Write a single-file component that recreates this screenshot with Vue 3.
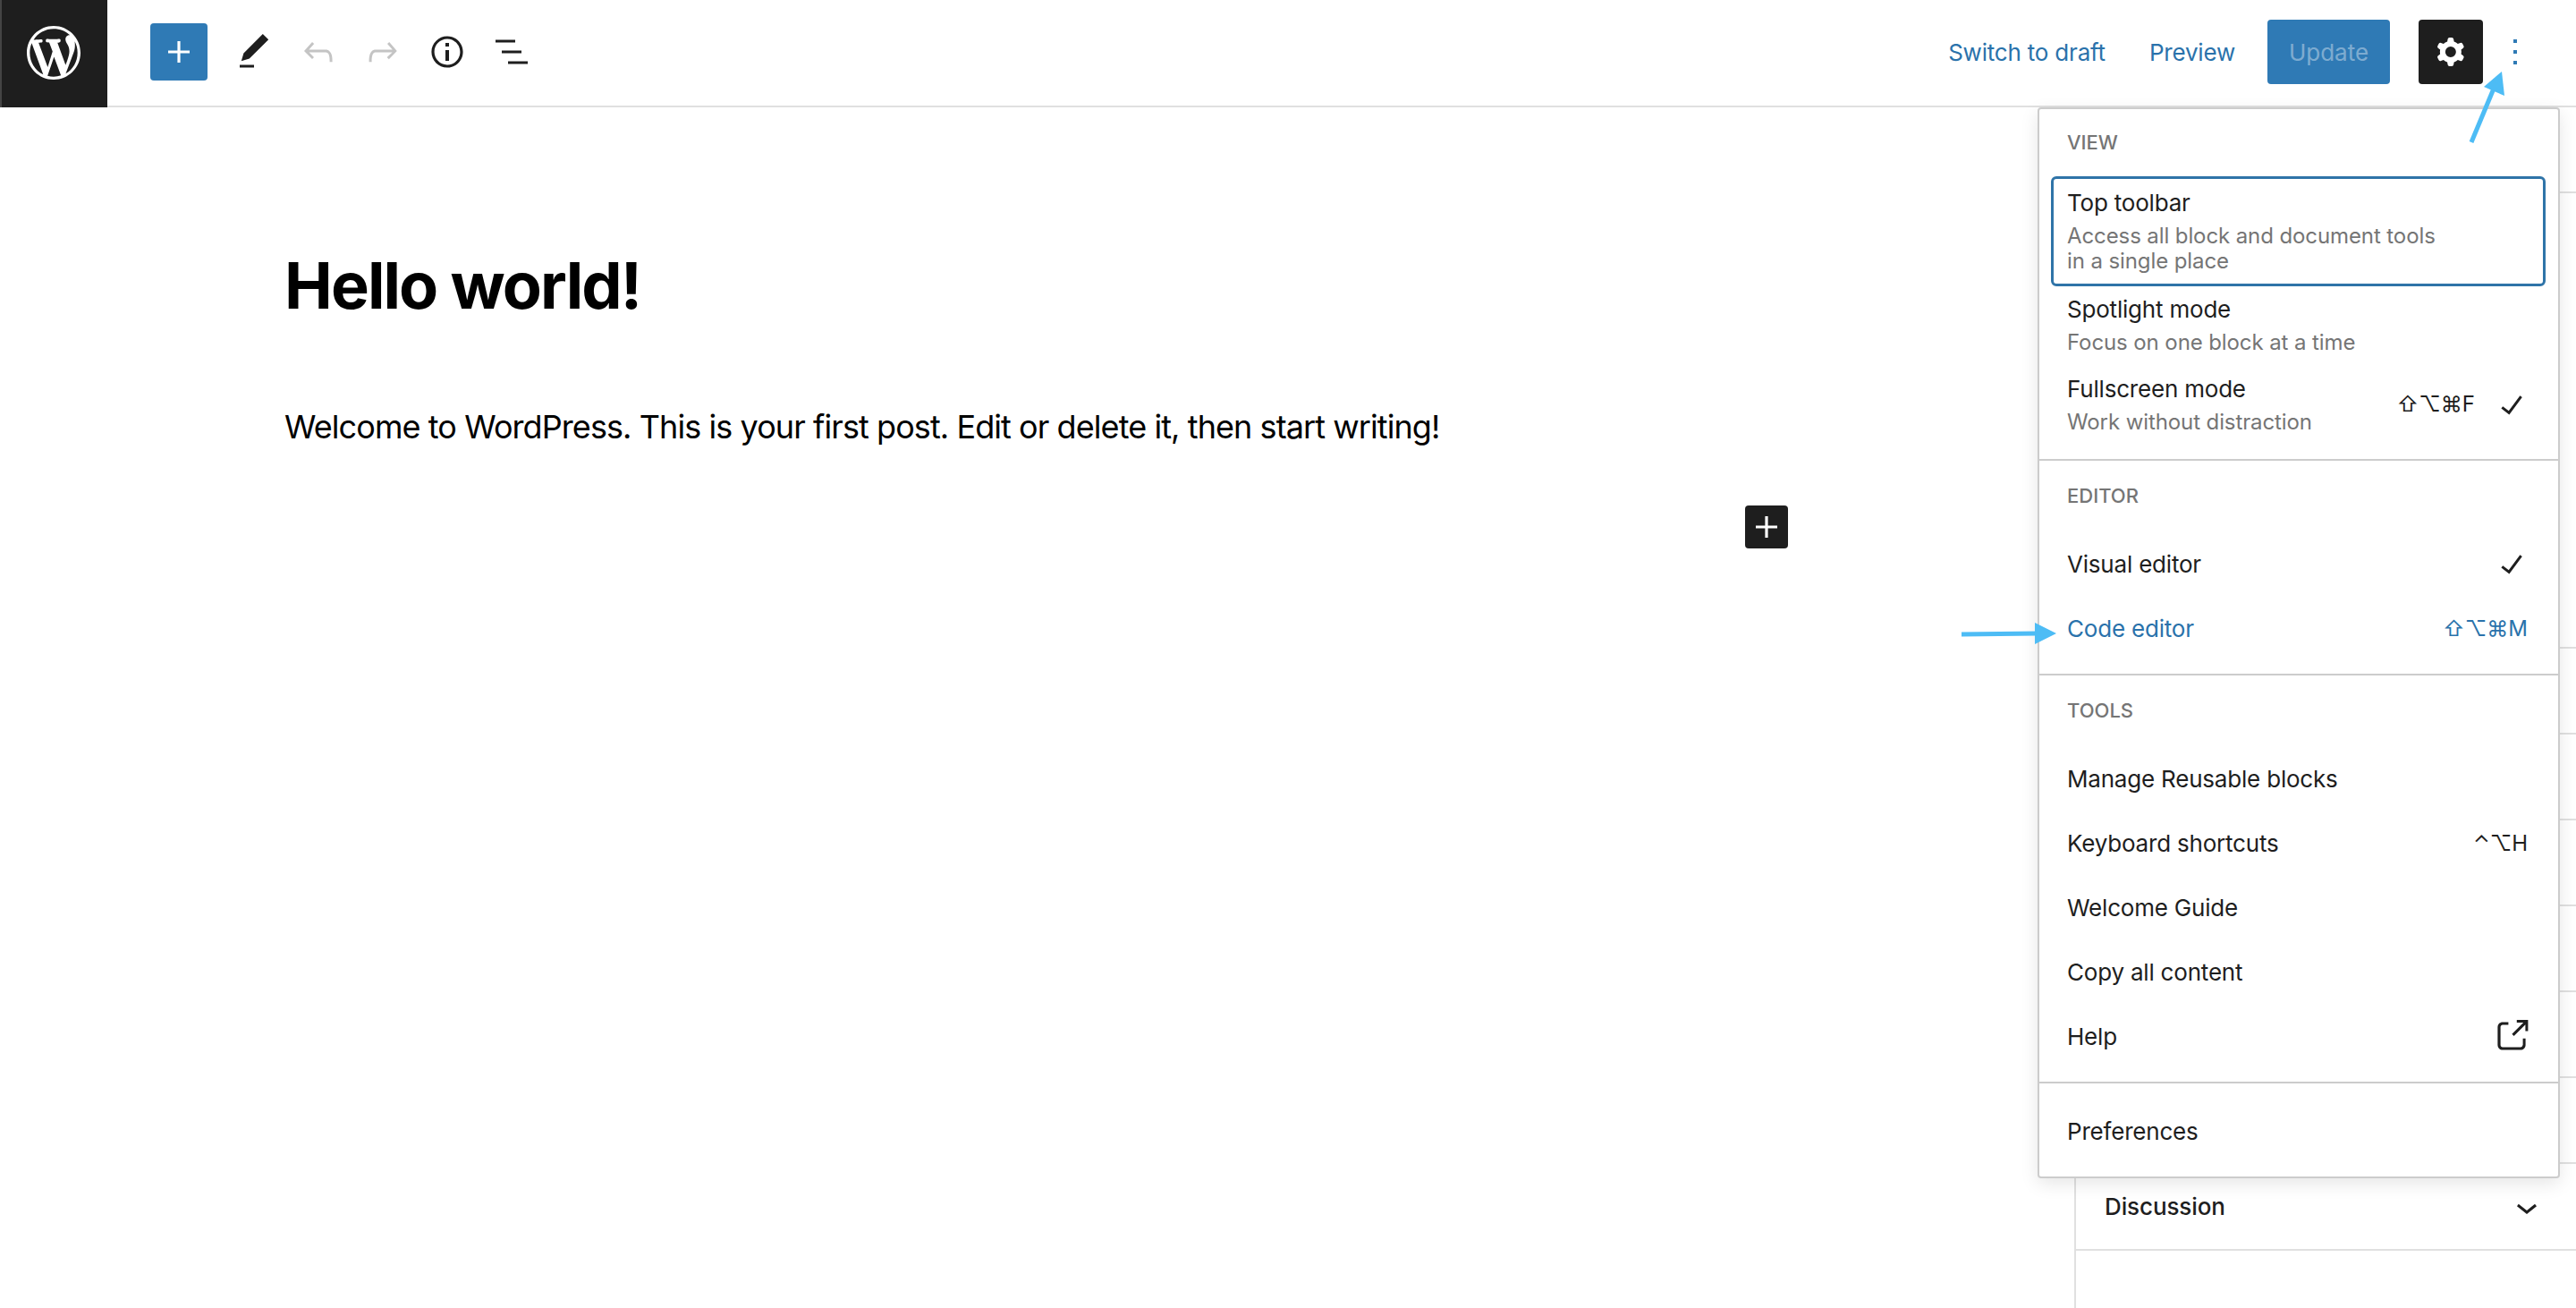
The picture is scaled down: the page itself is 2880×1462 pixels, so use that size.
<template>
  <div class="editor-page">
    <header class="topbar">
      <a class="logo">
        <svg width="60" height="60" viewBox="0 0 20 20" fill="#fff">
          <path d="M20 10c0-5.51-4.49-10-10-10C4.48 0 0 4.49 0 10c0 5.52 4.48 10 10 10 5.51 0 10-4.48 10-10zM7.78 15.37L4.37 6.22c.55-.02 1.17-.08 1.17-.08.5-.06.44-1.13-.06-1.11 0 0-1.45.11-2.37.11-.18 0-.37 0-.58-.01C4.12 2.69 6.87 1.11 10 1.11c2.33 0 4.45.87 6.05 2.34-.68-.11-1.65.39-1.65 1.58 0 .74.45 1.36.9 2.1.35.61.55 1.36.55 2.46 0 1.49-1.4 5-1.4 5l-3.03-8.37c.54-.02.82-.17.82-.17.5-.05.44-1.25-.06-1.22 0 0-1.44.12-2.38.12-.87 0-2.33-.12-2.33-.12-.5-.03-.56 1.2-.06 1.22l.92.08 1.26 3.41zM17.41 10c.24-.64.74-1.87.43-4.25.7 1.29 1.05 2.71 1.05 4.25 0 3.29-1.73 6.24-4.4 7.78.97-2.59 1.94-5.2 2.92-7.78zM6.1 18.09C3.12 16.65 1.11 13.53 1.11 10c0-1.3.23-2.48.72-3.59C3.25 10.3 4.67 14.2 6.1 18.09zm4.03-6.63l2.58 6.98c-.86.29-1.76.45-2.71.45-.79 0-1.57-.11-2.29-.33.81-2.38 1.62-4.74 2.42-7.1z" />
        </svg>
      </a>
      <button class="add-btn">
        <svg width="48" height="48" viewBox="0 0 24 24" fill="#fff"><path :d="plusPath" /></svg>
      </button>
      <div class="tools">
        <svg width="48" height="48" viewBox="0 0 24 24" fill="#1e1e1e"><path d="M20.1 5.1L16.9 2 6.2 12.7l-1.3 4.4 4.5-1.3L20.1 5.1zM4 20.8h8v-1.5H4v1.5z" /></svg>
        <svg width="48" height="48" viewBox="0 0 24 24" fill="#c4c4c4"><path d="M18.3 11.7c-.6-.6-1.4-.9-2.3-.9H6.7l2.9-3.3-1.1-1-4.5 5L8.5 16l1-1-2.7-2.7H16c.5 0 .9.2 1.3.5 1 1 1 3.4 1 4.5v.3h1.5v-.2c0-1.5 0-4.3-1.5-5.7z" /></svg>
        <svg width="48" height="48" viewBox="0 0 24 24" fill="#c4c4c4"><path d="M15.6 6.5l-1.1 1 2.9 3.3H8c-.9 0-1.7.3-2.3.9-1.4 1.5-1.4 4.2-1.4 5.7v.2h1.5v-.3c0-1.1 0-3.5 1-4.5.3-.3.7-.5 1.3-.5h9.2L14.3 15l1.1 1.1 4.5-4.6-4.3-5z" /></svg>
        <svg width="48" height="48" viewBox="0 0 24 24" fill="#1e1e1e"><path d="M12 3.2c-4.8 0-8.8 3.9-8.8 8.8 0 4.8 3.9 8.8 8.8 8.8 4.8 0 8.8-3.9 8.8-8.8 0-4.8-4-8.8-8.8-8.8zm0 16c-4 0-7.2-3.3-7.2-7.2C4.8 8 8 4.8 12 4.8s7.2 3.3 7.2 7.2c0 4-3.2 7.2-7.2 7.2zM11 17h2v-6h-2v6zm0-8h2V7h-2v2z" /></svg>
        <svg width="48" height="48" viewBox="0 0 24 24" fill="#1e1e1e"><path d="M3 5.2h11v1.5H3zM6.5 11.25h11v1.5h-11zM10 17.3h11v1.5H10z" /></svg>
      </div>
      <div class="actions">
        <a class="link switch">Switch to draft</a>
        <a class="link preview">Preview</a>
        <button class="update">Update</button>
        <button class="settings">
          <svg width="48" height="48" viewBox="0 0 24 24" fill="#fff"><path fill-rule="evenodd" clip-rule="evenodd" d="M10.289 4.836A1 1 0 0111.275 4h1.306a1 1 0 01.987.836l.244 1.466c.787.26 1.503.679 2.108 1.218l1.393-.522a1 1 0 011.216.437l.653 1.13a1 1 0 01-.23 1.273l-1.148.944a6.025 6.025 0 010 2.435l1.149.946a1 1 0 01.23 1.272l-.653 1.13a1 1 0 01-1.216.437l-1.394-.522c-.605.54-1.32.958-2.108 1.218l-.244 1.466a1 1 0 01-.987.836h-1.306a1 1 0 01-.986-.836l-.244-1.466a5.995 5.995 0 01-2.108-1.218l-1.394.522a1 1 0 01-1.217-.436l-.653-1.131a1 1 0 01.23-1.272l1.149-.946a6.026 6.026 0 010-2.435l-1.148-.944a1 1 0 01-.23-1.272l.653-1.131a1 1 0 011.217-.437l1.393.522a5.994 5.994 0 012.108-1.218l.244-1.466zM14.929 12a3 3 0 11-6 0 3 3 0 016 0z" /></svg>
        </button>
        <svg class="more" width="48" height="48" viewBox="0 0 24 24" fill="#2f7ab5"><path d="M13 19h-2v-2h2v2zm0-6h-2v-2h2v2zm0-6h-2V5h2v2z" /></svg>
      </div>
    </header>

    <main class="body">
      <section class="canvas">
        <h1 class="post-title">Hello world!</h1>
        <p class="post-text">Welcome to WordPress. This is your first post. Edit or delete it, then start writing!</p>
        <button class="inserter">
          <svg width="48" height="48" viewBox="0 0 24 24" fill="#fff"><path :d="plusPath" /></svg>
        </button>
      </section>
      <aside class="sidebar">
        <div class="panel panel-first"></div>
        <div class="panel panel-tall"></div>
        <div v-for="n in 6" :key="n" class="panel"></div>
        <div class="panel panel-last">
          <span>Discussion</span>
          <svg width="48" height="48" viewBox="0 0 24 24" fill="#1e1e1e"><path d="M17.5 11.6L12 16l-5.5-4.4.9-1.2L12 14l4.5-3.6 1 1.2z" /></svg>
        </div>
      </aside>
    </main>

    <div class="menu">
      <div class="group group-view">
        <div class="label">View</div>
        <div class="item item-focus">
          <div class="item-text">
            <div>Top toolbar</div>
            <div class="desc">Access all block and document tools<br />in a single place</div>
          </div>
        </div>
        <div class="item">
          <div class="item-text">
            <div>Spotlight mode</div>
            <div class="desc">Focus on one block at a time</div>
          </div>
        </div>
        <div class="item">
          <div class="item-text">
            <div>Fullscreen mode</div>
            <div class="desc">Work without distraction</div>
          </div>
          <span class="keys keys-check">⇧⌥⌘F</span>
          <svg width="48" height="48" viewBox="0 0 24 24" fill="#1e1e1e"><path :d="checkPath" /></svg>
        </div>
      </div>

      <div class="group">
        <div class="label">Editor</div>
        <div class="row">
          <span>Visual editor</span>
          <svg width="48" height="48" viewBox="0 0 24 24" fill="#1e1e1e"><path :d="checkPath" /></svg>
        </div>
        <div class="row row-active">
          <span>Code editor</span>
          <span class="keys">⇧⌥⌘M</span>
        </div>
      </div>

      <div class="group">
        <div class="label">Tools</div>
        <div class="row"><span>Manage Reusable blocks</span></div>
        <div class="row">
          <span>Keyboard shortcuts</span>
          <span class="keys">⌃⌥H</span>
        </div>
        <div class="row"><span>Welcome Guide</span></div>
        <div class="row"><span>Copy all content</span></div>
        <div class="row">
          <span>Help</span>
          <svg width="48" height="48" viewBox="0 0 24 24" fill="#1e1e1e"><path d="M18.2 17c0 .7-.6 1.2-1.2 1.2H7c-.7 0-1.2-.6-1.2-1.2V7c0-.7.6-1.2 1.2-1.2h3.2V4.2H7C5.5 4.2 4.2 5.5 4.2 7v10c0 1.5 1.2 2.8 2.8 2.8h10c1.5 0 2.8-1.2 2.8-2.8v-3.6h-1.5V17zM14.9 3v1.5h3.7l-6.4 6.4 1.1 1.1 6.4-6.4v3.7h1.5V3h-6.8z" /></svg>
        </div>
      </div>

      <div class="group group-last">
        <div class="row"><span>Preferences</span></div>
      </div>
    </div>

    <!-- annotation arrows on top of the screenshot -->
    <svg class="arrow arrow-up" width="60" height="90" viewBox="0 0 60 90">
      <path d="M5 80L30 20" stroke="#4dbcf5" stroke-width="5" fill="none" />
      <path d="M39 1L19 18L42 28z" fill="#4dbcf5" />
    </svg>
    <svg class="arrow arrow-right" width="110" height="30" viewBox="0 0 110 30">
      <path d="M1 16L86 15" stroke="#4dbcf5" stroke-width="5" fill="none" />
      <path d="M83 3L107 15L83 27z" fill="#4dbcf5" />
    </svg>
  </div>
</template>

<script setup>
const plusPath = 'M18 11.2h-5.2V6h-1.6v5.2H6v1.6h5.2V18h1.6v-5.2H18z';
const checkPath = 'M16.7 7.1l-6.3 8.5-3.3-2.5-.9 1.2 4.5 3.4L17.9 8z';
</script>

<style>
html,
body {
  margin: 0;
  background: #fff;
}
</style>

<style scoped>
.editor-page {
  position: relative;
  height: 100vh;
  overflow: hidden;
  background: #fff;
  color: #1e1e1e;
  font-family: Inter, 'DejaVu Sans', sans-serif;
  font-size: 26px;
}

button {
  border: none;
  padding: 0;
  font: inherit;
  display: flex;
  align-items: center;
  justify-content: center;
}

.topbar {
  display: flex;
  align-items: center;
  box-sizing: border-box;
  height: 120px;
  padding-bottom: 2px;
  border-bottom: 2px solid #e0e0e0;
}

.logo {
  align-self: flex-start;
  box-sizing: border-box;
  width: 120px;
  height: 120px;
  padding: 0 2px 2px 0;
  display: flex;
  align-items: center;
  justify-content: center;
  background: #1e1e1e;
  border-left: 2px solid #444;
}

.add-btn {
  width: 64px;
  height: 64px;
  margin-left: 48px;
  border-radius: 4px;
  background: #2f7ab5;
}

.tools {
  display: flex;
  gap: 24px;
  margin-left: 28px;
}

.actions {
  display: flex;
  align-items: center;
  margin-left: auto;
  padding-right: 44px;
}

.link {
  color: #2a72ab;
  letter-spacing: -0.2px;
}

.preview {
  margin-left: 49px;
}

.update {
  width: 137px;
  height: 72px;
  margin-left: 36px;
  border-radius: 4px;
  background: #2f7ab5;
  color: rgba(255, 255, 255, 0.4);
}

.settings {
  width: 72px;
  height: 72px;
  margin-left: 32px;
  border-radius: 4px;
  background: #1e1e1e;
}

.more {
  margin-left: 12px;
}

.body {
  display: flex;
  height: calc(100vh - 120px);
}

.canvas {
  flex: 1;
  box-sizing: border-box;
  padding: 149px 318px 0 318px;
}

.post-title {
  margin: 0;
  font-size: 72px;
  line-height: 100px;
  font-weight: 700;
  letter-spacing: -1.9px;
  color: #000;
}

.post-text {
  margin: 78px 0 0;
  font-size: 36px;
  line-height: 60px;
  letter-spacing: -0.92px;
  color: #000;
  white-space: nowrap;
}

.inserter {
  width: 48px;
  height: 48px;
  margin: 58px 0 0 1633px;
  border-radius: 4px;
  background: #1e1e1e;
}

.sidebar {
  width: 561px;
  flex: none;
  border-left: 2px solid #e0e0e0;
  box-sizing: border-box;
}

.panel {
  box-sizing: border-box;
  height: 96px;
  border-bottom: 2px solid #e0e0e0;
}

.panel-tall {
  height: 509px;
}

.panel-last {
  height: 97px;
  padding: 0 31px 0 32px;
  display: flex;
  align-items: center;
  justify-content: space-between;
  font-weight: 500;
  letter-spacing: -0.1px;
}

.menu {
  position: absolute;
  top: 120px;
  left: 2278px;
  width: 584px;
  box-sizing: border-box;
  border: 2px solid #ccc;
  border-radius: 4px;
  background: #fff;
  box-shadow: 0 6px 20px rgba(0, 0, 0, 0.1);
  letter-spacing: -0.2px;
}

.group {
  padding: 19px 14px 15px 13px;
  border-top: 2px solid #ccc;
}

.group-view {
  padding-top: 17px;
  border-top: none;
}

.group-last {
  padding-top: 17px;
  padding-bottom: 15px;
}

.label {
  height: 40px;
  line-height: 40px;
  margin-bottom: 20px;
  padding-left: 18px;
  font-size: 22px;
  font-weight: 500;
  letter-spacing: 0;
  text-transform: uppercase;
  color: #757575;
}

.group-view .label {
  margin-bottom: 18px;
}

.item {
  display: flex;
  align-items: center;
  padding: 8px 14px 12px 18px;
}

.item-focus {
  padding: 9px 11px 11px 15px;
  border: 3px solid #2f74a8;
  border-radius: 6px;
}

.item-text {
  flex: 1;
  line-height: 36px;
}

.desc {
  margin-top: 5px;
  font-size: 24px;
  line-height: 28px;
  letter-spacing: -0.1px;
  color: #757575;
}

.row {
  display: flex;
  align-items: center;
  justify-content: space-between;
  height: 72px;
  padding: 0 14px 0 18px;
}

.row-active {
  color: #2a72ab;
}

.keys {
  margin-right: 6px;
  font-size: 24px;
  letter-spacing: 0;
  white-space: nowrap;
}

.keys-check {
  margin-right: 17px;
}

.arrow {
  position: absolute;
}

.arrow-up {
  left: 2758px;
  top: 79px;
}

.arrow-right {
  left: 2192px;
  top: 693px;
}
</style>
